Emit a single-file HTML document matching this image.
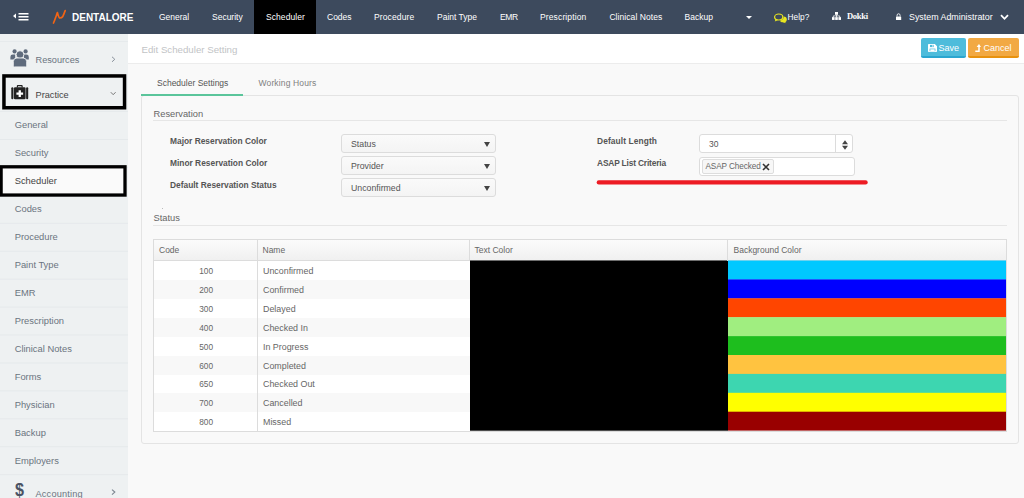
<!DOCTYPE html>
<html>
<head>
<meta charset="utf-8">
<title>Edit Scheduler Setting</title>
<style>
*{box-sizing:border-box;margin:0;padding:0}
html,body{width:1024px;height:498px;overflow:hidden}
body{font-family:"Liberation Sans","DejaVu Sans",sans-serif;font-size:9px;color:#555;background:#f9f9f9;position:relative}
.abs{position:absolute}
/* navbar */
#nav{position:absolute;left:0;top:0;width:1024px;height:34px;background:#3d4a5d}
#nav .it{position:absolute;top:0;height:34px;line-height:34px;color:#fff;font-size:8.5px;white-space:nowrap}
#nav .act{position:absolute;top:0;height:34px;background:#000}
#brand{position:absolute;left:72px;top:.5px;height:34px;line-height:34px;color:#fff;font-weight:bold;font-size:10px;letter-spacing:0}
/* sidebar */
#side{position:absolute;left:0;top:34px;width:128px;height:464px;background:#eef1f2}
#side .sub{position:absolute;left:14.7px;font-size:9.35px;color:#6b7480;white-space:nowrap;line-height:12px}
#side .ln{position:absolute;left:0;width:128px;height:1px;background:#e6eaec}
#side .main{position:absolute;left:35.5px;font-size:9.2px;color:#6b7480;white-space:nowrap;line-height:12px}
/* content */
#titlebar{position:absolute;left:128px;top:34px;width:896px;height:30px;background:#fff;border-bottom:1px solid #ececec}
#title{position:absolute;left:13.5px;top:.5px;line-height:29px;font-size:9.7px;color:#c2c4c6}
.btn{position:absolute;top:4px;height:20px;line-height:18px;color:#fff;font-size:9px;border-radius:2px;white-space:nowrap}
.tab{position:absolute;top:77px;font-size:8.5px;line-height:12px;white-space:nowrap}
#panel{position:absolute;left:141px;top:95px;width:878px;height:349px;background:#f9f9f9;border:1px solid #e4e4e4;border-radius:3px}
.legend{position:absolute;left:153.5px;font-size:9.3px;color:#666;line-height:12px}
.hr{position:absolute;left:153px;width:854px;height:1px;background:#e6e6e6}
.lbl{position:absolute;font-size:8.4px;font-weight:bold;color:#555;line-height:12px;white-space:nowrap}
.sel{position:absolute;height:19px;background:linear-gradient(#fafafa,#f4f4f4);border:1px solid #dcdcdc;border-radius:3px;font-size:8.75px;color:#555;line-height:18.5px;padding-left:9px}
.sel i{position:absolute;right:5.5px;top:7px;width:0;height:0;border-left:3px solid transparent;border-right:3px solid transparent;border-top:5px solid #444}
.inp{position:absolute;height:19px;background:#fff;border:1px solid #dcdcdc;border-radius:3px;font-size:8.5px;color:#555;line-height:17px}
/* grid */
#grid{position:absolute;left:153px;top:239px;width:854px;height:193px;border:1px solid #dcdcdc;background:#fff}
#ghead{position:absolute;left:0;top:0;width:852px;height:21px;background:linear-gradient(#fbfbfb,#f0f0f0);border-bottom:1px solid #dcdcdc}
#ghead span{position:absolute;top:0;line-height:21px;font-size:8.5px;color:#666}
.vl{position:absolute;top:0;width:1px;background:#dcdcdc}
.row{position:absolute;left:0;width:316px;height:19px;font-size:8.5px;color:#666;line-height:20px}
.row.alt{background:#f8f8f8}
.row b{font-weight:normal;position:absolute;left:0;width:59px;text-align:right;font-size:8.3px}
.row em{font-style:normal;position:absolute;left:109px;font-size:8.9px}
.cb{position:absolute;left:574px;width:278px;height:19px}
</style>
</head>
<body>
<div id="nav">
  <svg class="abs" style="left:12px;top:12px" width="18" height="10" viewBox="0 0 18 10"><path d="M1 4 L4 1.5 L4 6.5 Z" fill="#fff"/><rect x="6.5" y="1" width="10" height="1.5" fill="#fff"/><rect x="6.5" y="4" width="10" height="1.5" fill="#fff"/><rect x="6.5" y="7" width="10" height="1.5" fill="#fff"/></svg>
  <svg class="abs" style="left:52px;top:9px" width="16" height="16" viewBox="0 0 16 16"><path d="M1.5 14 C3 10.5 4.5 6 5.4 3.6 C6 5.5 6.8 9 7.9 9 C9.1 9 10 8.7 10.6 7.8 C11.6 6 12.5 3.5 13.2 1.6" fill="none" stroke="#f26414" stroke-width="1.7" stroke-linejoin="round" stroke-linecap="round"/></svg>
  <div id="brand">DENTALORE</div>
  <div class="act" style="left:254px;width:62px"></div>
  <div class="it" style="left:159px">General</div>
  <div class="it" style="left:212px">Security</div>
  <div class="it" style="left:266px;letter-spacing:.07px">Scheduler</div>
  <div class="it" style="left:327px">Codes</div>
  <div class="it" style="left:374px;letter-spacing:.13px">Procedure</div>
  <div class="it" style="left:437px">Paint Type</div>
  <div class="it" style="left:500px;letter-spacing:-.4px">EMR</div>
  <div class="it" style="left:540px;letter-spacing:.13px">Prescription</div>
  <div class="it" style="left:609.4px;letter-spacing:.07px">Clinical Notes</div>
  <div class="it" style="left:684.6px">Backup</div>
  <div class="abs" style="left:746px;top:16px;width:0;height:0;border-left:3px solid transparent;border-right:3px solid transparent;border-top:3px solid #fff"></div>
  <svg class="abs" style="left:773px;top:11.5px" width="15" height="12" viewBox="0 0 15 12"><g fill="#e9e620"><ellipse cx="10.3" cy="7.4" rx="3.5" ry="2.9"/><path d="M11.2 9.4 L13.3 11.2 L9.8 10.2z"/></g><ellipse cx="5.7" cy="5" rx="4.9" ry="3.8" fill="#3d4a5d"/><ellipse cx="5.7" cy="5" rx="4.1" ry="3" fill="#3d4a5d" stroke="#e9e620" stroke-width="1.2"/><path d="M2.6 7.2 L1.8 9.6 L5.2 8.1z" fill="#e9e620"/></svg>
  <div class="it" style="left:787.6px;font-size:8.3px">Help?</div>
  <svg class="abs" style="left:831.6px;top:11.8px" width="9" height="8.4" viewBox="0 0 9 9" preserveAspectRatio="none"><rect x="3" y="0" width="3" height="3" fill="#fff"/><rect x="0" y="5.5" width="2.6" height="3" fill="#fff"/><rect x="3.2" y="5.5" width="2.6" height="3" fill="#fff"/><rect x="6.4" y="5.5" width="2.6" height="3" fill="#fff"/><path d="M4.5 3 V5.5 M1.3 5.5 V4.2 H7.7 V5.5" stroke="#fff" stroke-width=".8" fill="none"/></svg>
  <div class="it" style="left:847px;font-family:'Liberation Serif',serif;font-weight:bold;font-size:8.6px;letter-spacing:-.35px;top:-1px">Dokki</div>
  <svg class="abs" style="left:895.4px;top:12.6px" width="7.2" height="7.8" viewBox="0 0 8 9"><rect x="1" y="4" width="6" height="4.5" rx=".6" fill="#fff"/><path d="M2.3 4 V2.6 a1.7 1.7 0 0 1 3.4 0 V4" fill="none" stroke="#fff" stroke-width="1"/></svg>
  <div class="it" style="left:909px;font-size:8.87px">System Administrator</div>
  <svg class="abs" style="left:1000px;top:14px" width="9" height="7" viewBox="0 0 9 7"><path d="M1 1.2 L4.5 4.8 L8 1.2" fill="none" stroke="#fff" stroke-width="1.8"/></svg>
</div>

<div id="side">
  <div class="ln" style="top:7px"></div>
  <svg class="abs" style="left:0;top:0" width="128" height="464" viewBox="0 34 128 464">
   <g fill="#5f6b7c"><circle cx="14.6" cy="51.4" r="2.1"/><circle cx="25.6" cy="51.4" r="2.1"/><path d="M10.4 59.6 v-2.6 a2.4 2.4 0 0 1 2.4-2.4 h2.4 v5z"/><path d="M28.8 59.6 v-2.6 a2.4 2.4 0 0 0 -2.4-2.4 h-2.4 v5z"/><circle cx="20" cy="54.6" r="3.9" stroke="#eef1f2" stroke-width=".9"/><path d="M13.3 65.9 v-4.3 a3.6 3.6 0 0 1 3.6-3.6 h6.2 a3.6 3.6 0 0 1 3.6 3.6 v4.3 a1 1 0 0 1 -1 1 h-11.4 a1 1 0 0 1 -1-1z" stroke="#eef1f2" stroke-width=".9"/></g>
   <path d="M112 56.8 L114.8 59.3 L112 61.8" fill="none" stroke="#8a929c" stroke-width="1"/>
   <g fill="#e5e9eb"><rect x="0" y="139.00" width="128" height="1"/><rect x="0" y="166.93" width="128" height="1"/><rect x="0" y="222.79" width="128" height="1"/><rect x="0" y="250.72" width="128" height="1"/><rect x="0" y="278.65" width="128" height="1"/><rect x="0" y="306.58" width="128" height="1"/><rect x="0" y="334.51" width="128" height="1"/><rect x="0" y="362.44" width="128" height="1"/><rect x="0" y="390.37" width="128" height="1"/><rect x="0" y="418.30" width="128" height="1"/><rect x="0" y="446.23" width="128" height="1"/><rect x="0" y="474.16" width="128" height="1"/></g>
   <rect x="3.95" y="75.95" width="120.6" height="31.8" fill="none" stroke="#000" stroke-width="3.5"/>
   <g fill="#222"><rect x="11.3" y="87.3" width="2.1" height="12" rx="1"/><rect x="26.1" y="87.3" width="2.1" height="12" rx="1"/><rect x="13.9" y="87.3" width="11.7" height="12" rx="1.2"/><path d="M16.8 87.5 v-1.4 a1 1 0 0 1 1-1 h3.9 a1 1 0 0 1 1 1 v1.4 h-1.2 v-1.2 h-3.5 v1.2z"/></g><path d="M18.6 90.2 h2.3 v2.2 h2.2 v2.3 h-2.2 v2.2 h-2.3 v-2.2 h-2.2 v-2.3 h2.2z" fill="#fff"/>
   <path d="M110.8 92.2 L113.2 94.7 L115.6 92.2" fill="none" stroke="#777" stroke-width="1"/>
   <path d="M112 489.6 L114.8 492.1 L112 494.6" fill="none" stroke="#7f8893" stroke-width="1.2"/>
  </svg>
  <div class="ln" style="top:77px"></div>
  <div class="main" style="top:20px">Resources</div>
  <div class="main" style="top:55px;color:#444">Practice</div>
  <svg class="abs" style="left:0;top:129px" width="128" height="36" viewBox="0 163 128 36"><rect x="1.1" y="166.8" width="123.9" height="28.25" fill="#fafafa" stroke="#000" stroke-width="3.3"/></svg>
  <div class="sub" style="top:85.30px">General</div>
  <div class="sub" style="top:113.28px">Security</div>
  <div class="sub" style="top:141.25px;color:#444">Scheduler</div>
  <div class="sub" style="top:169.23px">Codes</div>
  <div class="sub" style="top:197.20px">Procedure</div>
  <div class="sub" style="top:225.18px">Paint Type</div>
  <div class="sub" style="top:253.15px">EMR</div>
  <div class="sub" style="top:281.12px">Prescription</div>
  <div class="sub" style="top:309.10px">Clinical Notes</div>
  <div class="sub" style="top:337.07px">Forms</div>
  <div class="sub" style="top:365.05px">Physician</div>
  <div class="sub" style="top:393.03px">Backup</div>
  <div class="sub" style="top:421.00px">Employers</div>
  <div class="abs" style="left:14.5px;top:445px;font-size:19px;font-weight:bold;line-height:22px;color:#4a5364;transform:scaleX(.85);transform-origin:0 0">$</div>
  <div class="main" style="top:453.5px;letter-spacing:.19px">Accounting</div>
</div>

<div id="titlebar">
  <div id="title">Edit Scheduler Setting</div>
  <div class="btn" style="left:793px;width:45px;background:#4ebcdb;border-bottom:2px solid #2ba6d0"><svg class="abs" style="left:7px;top:5.5px" width="9" height="8" viewBox="0 0 9 8"><path d="M0.8 0 H6.8 L9 2.2 V7.2 a.8 .8 0 0 1 -.8 .8 H.8 a.8 .8 0 0 1 -.8-.8 V.8 a.8 .8 0 0 1 .8-.8z" fill="#fff"/><rect x="2" y="0.9" width="4" height="2.2" fill="#4ebcdb"/><rect x="4.4" y="1.1" width="1" height="1.7" fill="#fff"/><rect x="1.6" y="4.6" width="5.8" height="2.6" fill="#4ebcdb"/><rect x="2.3" y="5.3" width="4.4" height="1.9" fill="#fff"/></svg><span class="abs" style="left:17.5px;top:1px">Save</span></div>
  <div class="btn" style="left:840px;width:51px;background:#f2a943;border-bottom:2px solid #e8920f"><svg class="abs" style="left:7px;top:5.5px" width="6" height="8" viewBox="0 0 6 8"><path d="M0.3 7.2 H4 V2.6" fill="none" stroke="#fff" stroke-width="1.5"/><path d="M1.6 3 L4 0 L6 3z" fill="#fff"/></svg><span class="abs" style="left:15.5px;top:1px">Cancel</span></div>
</div>

<div class="tab" style="left:157px;color:#555">Scheduler Settings</div>
<div class="tab" style="left:258.5px;color:#808080;letter-spacing:.14px">Working Hours</div>
<div id="panel"></div>
<div class="abs" style="left:141px;top:94px;width:102px;height:2px;background:#5bc59b"></div>
<div class="legend" style="top:108px">Reservation</div>
<div class="hr" style="top:120px"></div>
<div class="lbl" style="left:170px;top:135px">Major Reservation Color</div>
<div class="lbl" style="left:170px;top:157px">Minor Reservation Color</div>
<div class="lbl" style="left:170px;top:179px">Default Reservation Status</div>
<div class="sel" style="left:341px;top:134px;width:155px">Status<i></i></div>
<div class="sel" style="left:341px;top:156px;width:155px">Provider<i></i></div>
<div class="sel" style="left:341px;top:178px;width:155px">Unconfirmed<i></i></div>
<div class="lbl" style="left:597px;top:135px;letter-spacing:.1px">Default Length</div>
<div class="lbl" style="left:597px;top:157px;letter-spacing:-.17px">ASAP List Criteria</div>
<div class="inp" style="left:699px;top:134px;width:154px;padding-left:9px;line-height:19.5px">30<span class="abs" style="right:16px;top:0;width:1px;height:17px;background:#dcdcdc"></span><svg class="abs" style="right:4.5px;top:4.5px" width="6" height="10" viewBox="0 0 6 10"><path d="M0 4.2 L3 0.3 L6 4.2 Z M0 5.8 L3 9.7 L6 5.8 Z" fill="#444"/></svg></div>
<div class="inp" style="left:699px;top:157px;width:156px"><span class="abs" style="left:2px;top:1px;height:15px;width:72px;border:1px solid #ddd;border-radius:2px;background:#f7f7f7;line-height:13.5px;padding-left:2.5px;font-size:8.2px;letter-spacing:-.1px;color:#666">ASAP Checked<svg class="abs" style="right:3px;top:3px" width="8" height="8" viewBox="0 0 8 8"><path d="M1 1 L7 7 M7 1 L1 7" stroke="#333" stroke-width="1.6"/></svg></span></div>
<svg class="abs" style="left:590px;top:176px" width="290" height="12" viewBox="590 176 290 12"><line x1="598.8" y1="182.4" x2="865.6" y2="182.4" stroke="#ed1c24" stroke-width="4.3" stroke-linecap="round"/></svg>
<div class="abs" style="left:162px;top:208px;width:1px;height:1px;background:#bbb"></div>
<div class="legend" style="top:212px">Status</div>
<div class="hr" style="top:225px"></div>
<div id="grid"><div id="ghead"><span style="left:5px">Code</span><span style="left:108.5px">Name</span><span style="left:320.5px">Text Color</span><span style="left:579.5px">Background Color</span></div>
<div class="row" style="top:21.00px"><b>100</b><em>Unconfirmed</em></div>
<div class="row alt" style="top:39.90px"><b>200</b><em>Confirmed</em></div>
<div class="row" style="top:58.80px"><b>300</b><em>Delayed</em></div>
<div class="row alt" style="top:77.70px"><b>400</b><em>Checked In</em></div>
<div class="row" style="top:96.60px"><b>500</b><em>In Progress</em></div>
<div class="row alt" style="top:115.50px"><b>600</b><em>Completed</em></div>
<div class="row" style="top:134.40px"><b>650</b><em>Checked Out</em></div>
<div class="row alt" style="top:153.30px"><b>700</b><em>Cancelled</em></div>
<div class="row" style="top:172.20px"><b>800</b><em>Missed</em></div>
<svg class="abs" style="left:316px;top:20px" width="536" height="172" viewBox="470 260 536 172"><rect x="470" y="260.5" width="258" height="170.2" fill="#000"/><rect x="728" y="260.50" width="278" height="19.20" fill="#00c8ff"/><rect x="728" y="279.40" width="278" height="19.20" fill="#0000ff"/><rect x="728" y="298.30" width="278" height="19.20" fill="#ff4500"/><rect x="728" y="317.20" width="278" height="19.20" fill="#a0ee80"/><rect x="728" y="336.10" width="278" height="19.20" fill="#1ebe1e"/><rect x="728" y="355.00" width="278" height="19.20" fill="#ffc340"/><rect x="728" y="373.90" width="278" height="19.20" fill="#3dd6b0"/><rect x="728" y="392.80" width="278" height="19.20" fill="#ffff00"/><rect x="728" y="411.70" width="278" height="18.90" fill="#990000"/></svg>
<div class="vl" style="left:103px;height:191px"></div>
<div class="vl" style="left:315px;height:21px"></div>
<div class="vl" style="left:573px;height:21px"></div></div>

</body>
</html>
